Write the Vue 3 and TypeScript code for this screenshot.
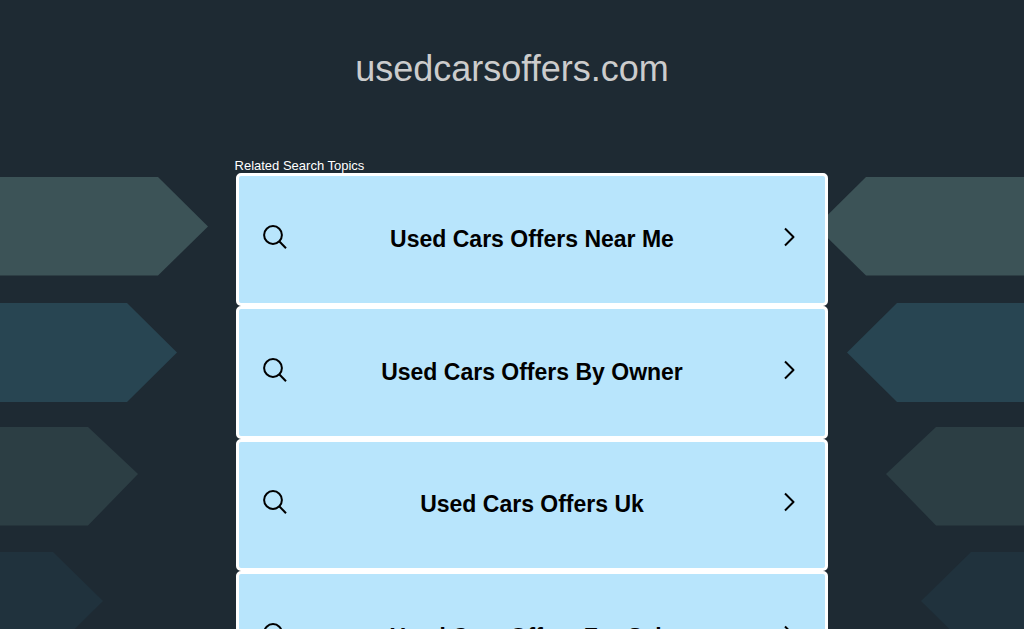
<script setup lang="ts">
interface Topic {
  id: number
  label: string
}

const topics: Topic[] = [
  { id: 1, label: 'Used Cars Offers Near Me' },
  { id: 2, label: 'Used Cars Offers By Owner' },
  { id: 3, label: 'Used Cars Offers Uk' },
  { id: 4, label: 'Used Cars Offers For Sale' },
]

const sides: string[] = ['left', 'right']
</script>

<template>
  <div class="page">
    <svg
      v-for="side in sides"
      :key="side"
      class="arrows"
      :class="side"
      width="208"
      height="474"
      viewBox="0 0 208 474"
      aria-hidden="true"
    >
      <path fill="#3c5357" d="M0 0H158L208 49.5L158 98.500H0Z" />
      <path fill="#284552" d="M0 126H127L177 175.500L127 225H0Z" />
      <path fill="#2c3e44" d="M0 250H88L138 297L88 348.500H0Z" />
      <path fill="#20323d" d="M0 375H53L103 424L53 473.500H0Z" />
    </svg>

    <header class="header">
      <h1 class="domain">usedcarsoffers.com</h1>
    </header>

    <main class="content">
      <h2 class="caption">Related Search Topics</h2>
      <nav class="topics" aria-label="Related Search Topics">
        <a v-for="topic in topics" :key="topic.id" class="topic" href="#">
          <svg class="icon" width="26" height="26" viewBox="0 0 26 26" aria-hidden="true">
            <circle cx="11" cy="11" r="8.900" />
            <path d="M17.200 17.200L24 24.200" />
          </svg>
          <span class="label">{{ topic.label }}</span>
          <svg class="icon" width="26" height="26" viewBox="0 0 26 26" aria-hidden="true">
            <path d="M9 4.500L17.500 13L9 21.500" />
          </svg>
        </a>
      </nav>
    </main>
  </div>
</template>

<style>
body {
  margin: 0;
  background: #1e2a33;
}
</style>

<style scoped>
.page {
  position: relative;
  height: 100vh;
  overflow: hidden;
  background: #1e2a33;
  font-family: "Liberation Sans", Arial, sans-serif;
}

.arrows {
  position: absolute;
  top: 177px;
}

.left {
  left: 0;
}

.right {
  right: 0;
  transform: scaleX(-1);
}

.header {
  padding: 49px 0 69px;
  text-align: center;
}

.domain {
  margin: 0;
  color: #ccc;
  font-size: 36px;
  font-weight: 400;
  line-height: 40px;
}

.content {
  position: relative;
  width: calc(54% + 41px);
  margin-left: calc(23% - 1px);
}

.caption {
  margin: 0;
  color: #fff;
  font-size: 13px;
  font-weight: 400;
  line-height: 15px;
}

.topics {
  display: grid;
  grid-template-rows: repeat(4, 1fr);
  height: 531px;
  margin-left: 1px;
}

.topic {
  display: flex;
  align-items: center;
  box-sizing: border-box;
  padding: 0 23px 1px;
  border: 3px solid #fff;
  border-radius: 5px;
  background: #b8e5fc;
  color: #000;
  text-decoration: none;
}

.label {
  flex: 1;
  font-size: 23px;
  font-weight: 700;
  line-height: 26px;
  text-align: center;
}

.icon {
  flex: none;
  margin-bottom: 4px;
  fill: none;
  stroke: #000;
  stroke-width: 2;
  stroke-linecap: butt;
  stroke-linejoin: round;
}
</style>
